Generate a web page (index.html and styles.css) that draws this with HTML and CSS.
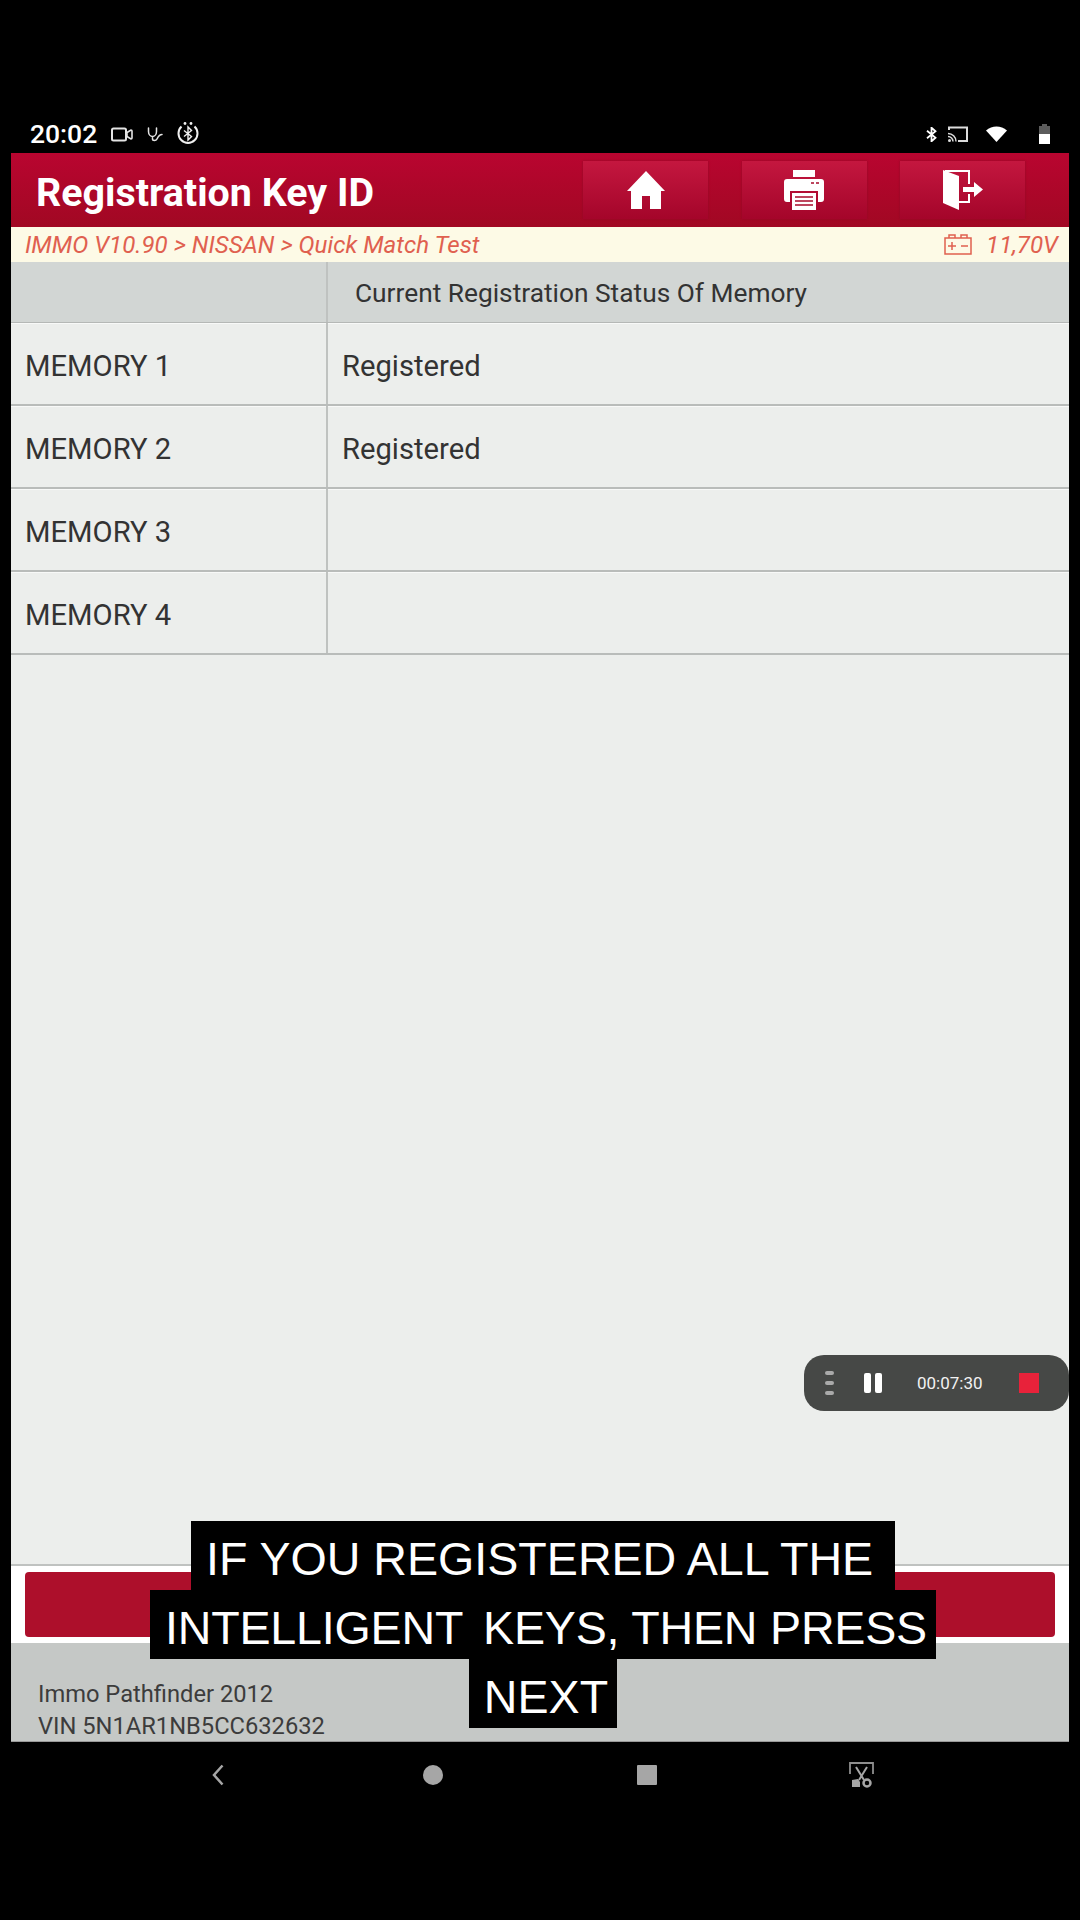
FILE: index.html
```html
<!DOCTYPE html>
<html lang="en">
<head>
    <meta charset="UTF-8">
    <meta name="viewport" content="width=device-width, initial-scale=1.0">
    <title>Registration Key ID</title>
    <link rel="stylesheet" href="styles.css">
</head>
<body>
    <div class="screen">
        <div class="statusbar">
            <div class="time">20:02</div>
            <svg class="ic-cam" width="22" height="15" viewBox="0 0 22 15">
                <rect x="1" y="1.500" width="14" height="12" rx="1.500" fill="none" stroke="#e4e4e4" stroke-width="2"/>
                <path d="M16 5.500l4-2.500a1 1 0 0 1 1 1v7a1 1 0 0 1-1 1l-4-2.500z" fill="none" stroke="#e4e4e4" stroke-width="1.600"/>
            </svg>
            <svg class="ic-steth" width="18" height="15" viewBox="0 0 18 15">
                <path d="M1.500 1v3.500c0 3 2 5 4 5s4-2 4-5V1M5.500 9.500V12c0 2 3.500 2 4.500 0s2-4.500 5-4.500" fill="none" stroke="#e4e4e4" stroke-width="1.500" stroke-linecap="round"/>
            </svg>
            <svg class="ic-btc" width="24" height="22" viewBox="0 0 24 22">
                <path d="M5.500 4.500a9.500 9.500 0 1 0 13 0" fill="none" stroke="#f0f0f0" stroke-width="2"/>
                <circle cx="9" cy="1.500" r="1.400" fill="#f0f0f0"/>
                <circle cx="15" cy="1.500" r="1.400" fill="#f0f0f0"/>
                <path d="M8 8.500l7.500 6-3.500 3.500V5l3.500 3.500-7.500 6" fill="none" stroke="#f0f0f0" stroke-width="1.400"/>
            </svg>
            <div class="status-right">
                <svg width="11" height="15" viewBox="0 0 11 15">
                    <path d="M1 3.800l8.500 7-4 3.500V.7l4 3.500-8.500 7" fill="none" stroke="#fff" stroke-width="1.800"/>
                </svg>
                <svg class="ic-cast" width="20" height="16" viewBox="0 0 20 16">
                    <path d="M1 4V1.500h18v13.500H10" fill="none" stroke="#dcdcdc" stroke-width="2"/>
                    <path d="M0 7.500a8 8 0 0 1 8 8M0 10.500a5 5 0 0 1 5 5" fill="none" stroke="#dcdcdc" stroke-width="1.500"/>
                    <circle cx="1.500" cy="14.500" r="1.500" fill="#dcdcdc"/>
                </svg>
                <svg class="ic-wifi" width="21" height="16" viewBox="0 0 21 16">
                    <path d="M0 4.500C6 -1 15 -1 21 4.500L10.500 16z" fill="#fff"/>
                </svg>
                <svg class="ic-bat" width="11" height="20" viewBox="0 0 11 20">
                    <path d="M3 2V0h5v2h3v8H0V2z" fill="#5c5c5c"/>
                    <rect y="10" width="11" height="10" fill="#fff"/>
                </svg>
            </div>
        </div>

        <div class="app">
            <div class="topbar">
                <div class="page-title">Registration Key ID</div>
                <div class="top-buttons">
                    <div class="top-btn">
                        <svg width="38" height="38" viewBox="0 0 38 38">
                            <path d="M19 0L38 20h-4v18H23V25h-8v13H4V20H0z" fill="#fff"/>
                        </svg>
                    </div>
                    <div class="top-btn">
                        <svg width="40" height="40" viewBox="0 0 40 40">
                            <rect x="9" y="0" width="22" height="7" fill="#fff"/>
                            <path d="M3 9h34a3 3 0 0 1 3 3v17a3 3 0 0 1-3 3h-3V21H6v11H3a3 3 0 0 1-3-3V12a3 3 0 0 1 3-3z" fill="#fff"/>
                            <path d="M8 23h24v17H8z" fill="#fff"/>
                            <path d="M11 27h18M11 31h18M11 35h18" stroke="#a80a2a" stroke-width="1.500"/>
                            <path d="M27 13h3M32 13h3" stroke="#a80a2a" stroke-width="1.500"/>
                        </svg>
                    </div>
                    <div class="top-btn">
                        <svg width="40" height="40" viewBox="0 0 40 40">
                            <path d="M0 0l16 6v34L0 33z" fill="#fff"/>
                            <path d="M2 1h24v13M26 24v8H16" fill="none" stroke="#fff" stroke-width="2"/>
                            <path d="M20 17h11v-5l9 7.500-9 7.500v-5H20z" fill="#fff"/>
                        </svg>
                    </div>
                </div>
            </div>

            <div class="crumbs">
                <div class="crumb-path">IMMO V10.90 &gt; NISSAN &gt; Quick Match Test</div>
                <svg width="28" height="21" viewBox="0 0 28 21">
                    <path d="M1 4h26v16H1zM5 4V1h6v3M17 4V1h6v3" fill="none" stroke="#e0604f" stroke-width="1.500"/>
                    <path d="M4 12h8M8 8v8M17 12h7" fill="none" stroke="#e0604f" stroke-width="1.500"/>
                </svg>
                <div class="voltage">11,70V</div>
            </div>

            <div class="content">
                <div class="row head-row">
                    <div class="cell label-cell"></div>
                    <div class="cell head-cell">Current Registration Status Of Memory</div>
                </div>
                <div class="row">
                    <div class="cell label-cell">MEMORY 1</div>
                    <div class="cell">Registered</div>
                </div>
                <div class="row">
                    <div class="cell label-cell">MEMORY 2</div>
                    <div class="cell">Registered</div>
                </div>
                <div class="row">
                    <div class="cell label-cell">MEMORY 3</div>
                    <div class="cell"></div>
                </div>
                <div class="row">
                    <div class="cell label-cell">MEMORY 4</div>
                    <div class="cell"></div>
                </div>
            </div>

            <div class="action-bar">
                <div class="next-btn"></div>
            </div>

            <div class="vehicle-info">
                <div>Immo Pathfinder 2012</div>
                <div>VIN 5N1AR1NB5CC632632</div>
            </div>
        </div>

        <div class="navbar">
            <div class="nav-item">
                <svg width="12" height="22" viewBox="0 0 12 22">
                    <path d="M10.500 1.500L2 11l8.500 9.500" fill="none" stroke="#a6a6a6" stroke-width="2.500"/>
                </svg>
            </div>
            <div class="nav-item"><div class="nav-circle"></div></div>
            <div class="nav-item"><div class="nav-square"></div></div>
            <div class="nav-item">
                <svg width="25" height="26" viewBox="0 0 25 26">
                    <path d="M1 12V1h23v11" fill="none" stroke="#8e8e8e" stroke-width="1.800"/>
                    <path d="M7 5l8 13M18 5l-8 13" stroke="#a6a6a6" stroke-width="2"/>
                    <path d="M3 18l6-1 2 3v5H3z" fill="#a6a6a6"/>
                    <circle cx="18" cy="21" r="3.500" fill="none" stroke="#a6a6a6" stroke-width="2.500"/>
                </svg>
            </div>
        </div>

        <div class="rec-pill">
            <div class="rec-handle"><i></i><i></i><i></i></div>
            <div class="rec-pause"><i></i><i></i></div>
            <div class="rec-time">00:07:30</div>
            <div class="rec-stop"></div>
        </div>

        <div class="captions">
            <div><span>IF YOU REGISTERED ALL THE </span></div>
            <div class="cap-tight"><span>INTELLIGENT <i class="cap-gap"></i>KEYS, THEN PRESS</span></div>
            <div><span>NEXT</span></div>
        </div>
    </div>
</body>
</html>
```

FILE: styles.css
```css
* {
    box-sizing: border-box;
}
body {
    margin: 0;
    background-color: #000;
    font-family: Roboto, Arial, sans-serif;
}
.screen {
    position: relative;
    width: 1080px;
    height: 1920px;
    display: flex;
    flex-direction: column;
    overflow: hidden;
}

/* status bar */
.statusbar {
    height: 153px;
    padding: 112px 30px 0 30px;
    display: flex;
    align-items: flex-start;
    color: #fff;
}
.time {
    font-size: 26.500px;
    font-weight: 500;
    line-height: 44px;
    width: 67px;
}
.ic-cam {
    margin: 15px 0 0 14px;
}
.ic-steth {
    margin: 15px 0 0 14px;
}
.ic-btc {
    margin: 10px 0 0 11px;
}
.status-right {
    margin-left: auto;
    display: flex;
    align-items: center;
    height: 44px;
}
.ic-cast {
    margin-left: 11px;
}
.ic-wifi {
    margin-left: 18px;
}
.ic-bat {
    margin-left: 32px;
}

/* app */
.app {
    flex: 1;
    margin: 0 11px;
    display: flex;
    flex-direction: column;
    background-color: #eceeec;
}
.topbar {
    height: 74px;
    display: flex;
    align-items: center;
    justify-content: space-between;
    padding: 0 44px 0 25px;
    background: linear-gradient(#b90530, #a10823);
}
.page-title {
    font-size: 39.400px;
    font-weight: 700;
    color: #fff;
    padding-top: 4px;
}
.top-buttons {
    display: flex;
    gap: 33.500px;
}
.top-btn {
    width: 125px;
    height: 58px;
    display: flex;
    align-items: center;
    justify-content: center;
    background: linear-gradient(#c4173f, #a4052a);
    box-shadow: 0 0 2px #8f0a26;
}
.crumbs {
    height: 35px;
    display: flex;
    align-items: center;
    padding: 0 11px 0 14px;
    background-color: #fdfae6;
    color: #e0604f;
    font-size: 24.100px;
    font-style: italic;
}
.crumb-path {
    flex: 1;
}
.voltage {
    margin-left: 14px;
}
.content {
    flex: 1;
    color: #333;
    font-size: 29.200px;
}
.row {
    display: flex;
    height: 83px;
    border-bottom: 2px solid #b9bcba;
    box-shadow: inset 0 1px 0 #f8f9f8;
}
.cell {
    flex: 1;
    display: flex;
    align-items: center;
    padding: 4px 0 0 14px;
}
.label-cell {
    flex: none;
    width: 317px;
    border-right: 2px solid #bfc2c0;
}
.head-row {
    height: 61px;
    border-bottom: 1px solid #b5b8b6;
    background-color: #d2d6d4;
    box-shadow: none;
}
.head-cell {
    font-size: 26.300px;
    padding: 2px 0 0 27px;
}
.action-bar {
    height: 79px;
    padding: 6px 14px 7px 14px;
    background-color: #fff;
    border-top: 2px solid #bfc2c0;
}
.next-btn {
    height: 65px;
    border-radius: 4px;
    background-color: #ad0f2b;
}
.vehicle-info {
    height: 99px;
    padding: 35px 0 0 27px;
    background-color: #c5c8c6;
    border-bottom: 1px solid #999;
    color: #3c3c3c;
    font-size: 23.700px;
    line-height: 32px;
}

/* nav */
.navbar {
    height: 178px;
    padding: 20px 0 0 111px;
    display: grid;
    grid-template-columns: repeat(4, 214.5px);
    align-items: start;
}
.nav-item {
    height: 26px;
    display: flex;
    align-items: center;
    justify-content: center;
}
.nav-circle {
    width: 20px;
    height: 20px;
    border-radius: 50%;
    background-color: #a6a6a6;
}
.nav-square {
    width: 20px;
    height: 20px;
    border-radius: 1px;
    background-color: #a6a6a6;
}

/* screen recorder floating over the app */
.rec-pill {
    position: absolute;
    left: 804px;
    top: 1355px;
    width: 265px;
    height: 56px;
    padding-left: 21px;
    display: flex;
    align-items: center;
    border-radius: 20px;
    background-color: #464846;
    color: #f2f2f2;
}
.rec-handle {
    width: 9px;
    display: flex;
    flex-direction: column;
    gap: 6px;
}
.rec-handle i {
    display: block;
    height: 4px;
    border-radius: 2px;
    background-color: #aaa;
}
.rec-pause {
    margin-left: 30px;
    display: flex;
    gap: 4px;
}
.rec-pause i {
    display: block;
    width: 7px;
    height: 20px;
    border-radius: 2px;
    background-color: #fff;
}
.rec-time {
    margin-left: 35px;
    width: 66px;
    font-size: 17px;
}
.rec-stop {
    margin-left: 36px;
    width: 20px;
    height: 20px;
    background-color: #e8223a;
}

/* burned in subtitles */
.captions {
    position: absolute;
    left: 0;
    top: 1521px;
    width: 1086px;
    text-align: center;
    font-family: "Liberation Sans", Arial, sans-serif;
    font-size: 46.600px;
    color: #fff;
}
.captions div {
    height: 69px;
}
.captions span {
    display: inline-block;
    height: 69px;
    padding: 7px 9px 0 15px;
    line-height: 62px;
    background-color: #000;
    white-space: pre;
}
.cap-tight {
    letter-spacing: -0.2px;
}
.cap-gap {
    display: inline-block;
    width: 8px;
}
```
